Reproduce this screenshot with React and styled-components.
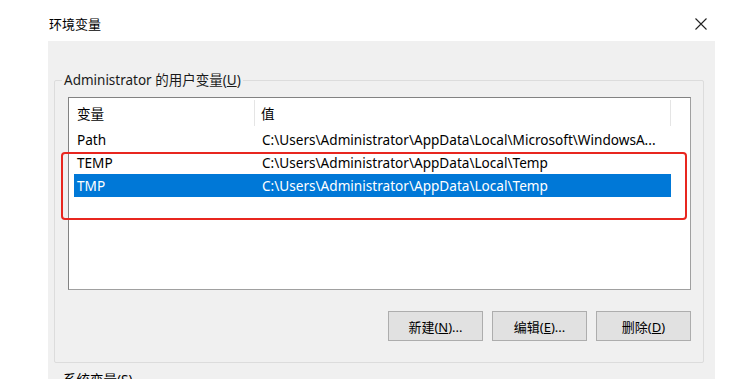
import React from "react";
import styled, { createGlobalStyle } from "styled-components";

const Global = createGlobalStyle`
  html, body { margin: 0; padding: 0; background: #ffffff; }
  body { font-family: "Noto Sans", "Noto Sans CJK SC", sans-serif; color: #000; overflow: hidden; }
`;

const Window = styled.div`
  width: 733px;
  height: 379px;
  display: flex;
  flex-direction: column;
  background: #fff;
  overflow: hidden;
`;

const TitleBar = styled.div`
  height: 41px;
  flex: none;
  display: flex;
  align-items: center;
  justify-content: space-between;
  padding: 0 26px 0 49px;
  box-sizing: border-box;
`;

const Title = styled.div`
  font-size: 13px;
  line-height: 16px;
  margin-top: 7px;
`;

const Close = styled.button`
  border: none;
  background: none;
  padding: 0;
  width: 12px;
  height: 12px;
  display: flex;
  margin-top: 7px;
`;

const Body = styled.div`
  flex: 1;
  margin-left: 48px;
  width: 667px;
  background: #f0f0f0;
  padding: 30px 11px 0 6px;
  box-sizing: border-box;
`;

const Group = styled.fieldset`
  margin: 0;
  border: 1px solid #dcdcdc;
  border-radius: 2px;
  padding: 0 12px 0 13px;
  height: 292px;
  box-sizing: border-box;
  display: flex;
  flex-direction: column;
  min-width: 0;
`;

const Legend = styled.legend`
  font-size: 13.5px;
  color: #1a1a1a;
  padding: 0 2px;
  margin-left: -6px;
  line-height: 18px;
`;

const Key = styled.span`
  text-decoration: underline;
`;

const ListWrap = styled.div`
  position: relative;
  margin-top: 8px;
  height: 193px;
  flex: none;
  border: 1px solid #828282;
  border-right-color: #a0a0a0;
  border-bottom-color: #a0a0a0;
  background: #fff;
  box-sizing: border-box;
  font-size: 13.6px;
`;

const HeaderRow = styled.div`
  display: grid;
  grid-template-columns: 186px 416px;
  height: 28px;
  margin-bottom: 2px;
  align-items: stretch;
`;

const HeaderCell = styled.div`
  display: flex;
  align-items: center;
  padding-left: ${(p) => p.$pad}px;
  border-right: 1px solid #e5e5e5;
  margin-top: 2px;
`;

const Row = styled.div`
  display: grid;
  grid-template-columns: 180px 417px;
  height: 23px;
  margin-left: 5px;
  width: 597px;
  align-items: center;
  background: ${(p) => (p.$selected ? "#0078d7" : "transparent")};
  color: ${(p) => (p.$selected ? "#ffffff" : "#000")};
`;

const Cell = styled.div`
  padding-left: ${(p) => p.$pad}px;
  white-space: nowrap;
  overflow: hidden;
`;

const Highlight = styled.div`
  position: absolute;
  left: -8px;
  top: 54px;
  width: 622px;
  height: 64px;
  border: 2.5px solid #e8261f;
  border-radius: 4px;
  pointer-events: none;
`;

const Buttons = styled.div`
  display: flex;
  justify-content: flex-end;
  gap: 9px;
  margin-top: 21px;
`;

const Button = styled.button`
  width: 95px;
  height: 30px;
  background: #e1e1e1;
  border: 1px solid #adadad;
  font-family: "Noto Sans", "Noto Sans CJK SC", sans-serif;
  font-size: 13px;
  color: #000;
  padding: 0;
`;

const NextLabel = styled.div`
  font-size: 13.5px;
  padding-left: 9px;
  margin-top: 6px;
`;

const rows = [
  ["Path", "C:\\Users\\Administrator\\AppData\\Local\\Microsoft\\WindowsA..."],
  ["TEMP", "C:\\Users\\Administrator\\AppData\\Local\\Temp"],
  ["TMP", "C:\\Users\\Administrator\\AppData\\Local\\Temp"],
];

export default function App() {
  return (
    <Window>
      <Global />
      <TitleBar>
        <Title>环境变量</Title>
        <Close aria-label="关闭">
          <svg width="12" height="12" viewBox="0 0 12 12">
            <path d="M0.5 0.5 L11.5 11.5 M11.5 0.5 L0.5 11.5" stroke="#222" strokeWidth="1.1" />
          </svg>
        </Close>
      </TitleBar>
      <Body>
        <Group>
          <Legend>
            Administrator 的用户变量(<Key>U</Key>)
          </Legend>
          <ListWrap>
            <HeaderRow>
              <HeaderCell $pad={8}>变量</HeaderCell>
              <HeaderCell $pad={6}>值</HeaderCell>
            </HeaderRow>
            {rows.map(([k, v], i) => (
              <Row key={k} $selected={i === 2}>
                <Cell $pad={3}>{k}</Cell>
                <Cell $pad={8}>{v}</Cell>
              </Row>
            ))}
            <Highlight />
          </ListWrap>
          <Buttons>
            <Button>新建(<Key>N</Key>)...</Button>
            <Button>编辑(<Key>E</Key>)...</Button>
            <Button>删除(<Key>D</Key>)</Button>
          </Buttons>
        </Group>
        <NextLabel>系统变量(<Key>S</Key>)</NextLabel>
      </Body>
    </Window>
  );
}
